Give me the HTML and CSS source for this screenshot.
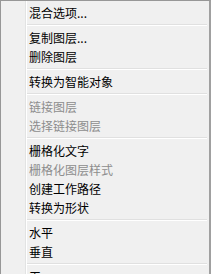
FILE: index.html
```html
<!DOCTYPE html>
<html lang="zh">
<head>
<meta charset="utf-8">
<link rel="stylesheet" href="styles.css">
</head>
<body>
<div class="menu">
  <div class="gutter"></div>
  <ul class="list">
    <li class="item">混合选项...</li>
    <li class="sep"></li>
    <li class="item">复制图层...</li>
    <li class="item">删除图层</li>
    <li class="sep"></li>
    <li class="item">转换为智能对象</li>
    <li class="sep"></li>
    <li class="item disabled">链接图层</li>
    <li class="item disabled">选择链接图层</li>
    <li class="sep"></li>
    <li class="item">栅格化文字</li>
    <li class="item disabled">栅格化图层样式</li>
    <li class="item">创建工作路径</li>
    <li class="item">转换为形状</li>
    <li class="sep"></li>
    <li class="item">水平</li>
    <li class="item">垂直</li>
    <li class="sep"></li>
    <li class="item">无</li>
  </ul>
</div>
</body>
</html>
```
FILE: styles.css
```css
html, body {
  margin: 0;
  padding: 0;
  background: #f0f0f0;
  overflow: hidden;
}
.menu {
  display: flex;
  width: 208px;
  height: calc(100vh - 1px);
  overflow: hidden;
  border-top: 1px solid #979797;
  border-left: 1px solid #979797;
  border-right: 2px solid #a0a0a0;
  background: #f0f0f0;
  font-family: "Noto Sans CJK SC", "Microsoft YaHei", sans-serif;
  font-size: 12px;
  color: #000;
}
.gutter {
  width: 24px;
  flex: none;
  border-right: 1px solid #e2e3e3;
  box-shadow: 1px 0 0 #ffffff;
}
.list {
  list-style: none;
  margin: 0;
  padding: 2px 2px 0 1px;
  flex: 1;
}
.item {
  height: 19px;
  line-height: 19px;
  padding-left: 2px;
  white-space: nowrap;
}
.item.disabled {
  color: #8d8d8d;
}
.sep {
  height: 6px;
  display: flex;
  flex-direction: column;
  justify-content: center;
}
.sep::before {
  content: "";
  display: block;
  height: 1px;
  background: #e0e0e0;
  border-bottom: 1px solid #ffffff;
}
```
